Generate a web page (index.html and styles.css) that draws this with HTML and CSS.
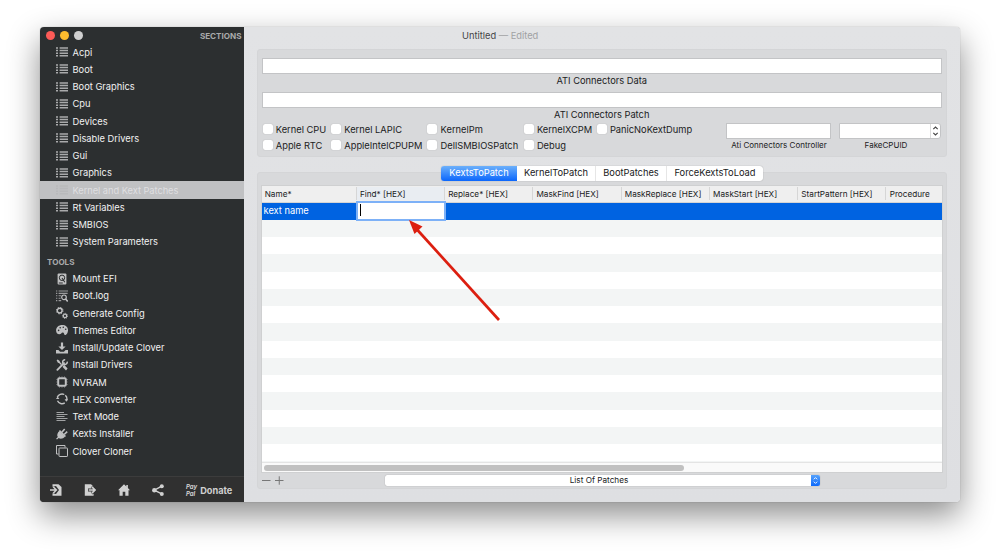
FILE: index.html
```
<!DOCTYPE html>
<html lang="en">
<head>
  <meta charset="UTF-8" />
  <meta name="viewport" content="width=device-width, initial-scale=1.0"/>
  <title>Untitled</title>
  <link rel="stylesheet" href="styles.css">
</head>
<body>
  <svg class="defs">
    <symbol id="i-list" viewBox="0 0 12 10">
      <path d="M0 1h2M0 3.6h2M0 6.2h2M0 8.8h2M3.6 1H12M3.6 3.6H12M3.6 6.2H12M3.6 8.8H12" stroke="currentColor" stroke-width="1.5"/>
    </symbol>
  </svg>

  <div class="window">
    <div class="sidebar">
      <div class="titlebar">
        <span class="light red"></span>
        <span class="light yellow"></span>
        <span class="light gray"></span>
        <span class="heading">SECTIONS</span>
      </div>
      <ul class="menu">
        <li><svg class="list"><use href="#i-list"/></svg>Acpi</li>
        <li><svg class="list"><use href="#i-list"/></svg>Boot</li>
        <li><svg class="list"><use href="#i-list"/></svg>Boot Graphics</li>
        <li><svg class="list"><use href="#i-list"/></svg>Cpu</li>
        <li><svg class="list"><use href="#i-list"/></svg>Devices</li>
        <li><svg class="list"><use href="#i-list"/></svg>Disable Drivers</li>
        <li><svg class="list"><use href="#i-list"/></svg>Gui</li>
        <li><svg class="list"><use href="#i-list"/></svg>Graphics</li>
        <li class="active"><svg class="list"><use href="#i-list"/></svg>Kernel and Kext Patches</li>
        <li><svg class="list"><use href="#i-list"/></svg>Rt Variables</li>
        <li><svg class="list"><use href="#i-list"/></svg>SMBIOS</li>
        <li><svg class="list"><use href="#i-list"/></svg>System Parameters</li>
      </ul>
      <div class="heading tools">TOOLS</div>
      <ul class="menu">
        <li>
          <svg viewBox="0 0 12 12"><rect x="1.6" y=".4" width="8.8" height="11.2" rx="1" fill="currentColor"/><circle cx="6" cy="4.8" r="2.7" fill="none" stroke="#2c2f30" stroke-width="1"/><path d="M6 5l2.8 4.2M2.8 10h4" stroke="#2c2f30" stroke-width="1.1"/></svg>
          Mount EFI
        </li>
        <li>
          <svg viewBox="0 0 12 12"><path d="M0 1h1.3M0 3.4h1.3M0 5.8h1.3M0 8.2h1.3M0 10.6h1.3M2.6 1H12M2.6 3.4h9M2.6 5.8h2.6M2.6 8.2h2M2.6 10.6h2.6" stroke="currentColor" stroke-width="1.1" opacity=".75"/><circle cx="8" cy="7.3" r="2.3" fill="none" stroke="currentColor" stroke-width="1.2"/><path d="M9.6 9l2.1 2.4" stroke="currentColor" stroke-width="1.5"/></svg>
          Boot.log
        </li>
        <li>
          <svg viewBox="0 0 12 12"><g fill="none" stroke="currentColor"><circle cx="3.7" cy="3.6" r="2.4" stroke-width="1.4"/><circle cx="3.7" cy="3.6" r="3.3" stroke-width="1" stroke-dasharray="1.3 1.29"/><circle cx="9" cy="8.9" r="1.7" stroke-width="1.3"/><circle cx="9" cy="8.9" r="2.6" stroke-width=".9" stroke-dasharray="1 1.04"/></g></svg>
          Generate Config
        </li>
        <li>
          <svg viewBox="0 0 12 12"><path d="M6.2 1C9.5 1 12 3 12 6c0 2.4-1.2 5-2.8 5-1.3 0-.8-2.6-2.5-2.6C5.2 8.4 5.4 10.2 3.4 10.2 1.2 10.2.1 8.6.1 6.5.1 3.2 2.9 1 6.2 1z" fill="currentColor"/><g fill="#2c2f30"><circle cx="2.6" cy="6.4" r=".8"/><circle cx="4.2" cy="3.7" r=".8"/><circle cx="7.3" cy="3.2" r=".8"/><circle cx="9.7" cy="5.3" r=".8"/></g></svg>
          Themes Editor
        </li>
        <li>
          <svg viewBox="0 0 12 12"><path d="M4.9.4h2.2v4h2.5L6 8 2.4 4.4h2.500zM0 8h2.4l1.7 1.7h3.8L9.6 8H12v3.6H0z" fill="currentColor"/></svg>
          Install/Update Clover
        </li>
        <li>
          <svg viewBox="0 0 12 12"><path d="M.6 1.3L1.7.4l2 1.5.2 1.2 2 2-.9.9-2-2-1.1-.2zM7.2 6.5l1.2-.6 3.2 3.7-1.6 1.8-3.4-3.5z" fill="currentColor"/><path d="M1.4 10.8L8 4.1" stroke="currentColor" stroke-width="1.9" stroke-linecap="round"/><path d="M11.2 2.7A2.3 2.3 0 1 1 9.2.8" fill="none" stroke="currentColor" stroke-width="1.5"/></svg>
          Install Drivers
        </li>
        <li>
          <svg viewBox="0 0 12 12"><rect x="2.2" y="2.2" width="7.6" height="7.6" rx="1" fill="none" stroke="currentColor" stroke-width="2"/><path d="M3.5 .3v1M6 .3v1M8.5 .3v1M3.5 10.7v1M6 10.7v1M8.5 10.7v1M.3 3.5h1M.3 6h1M.3 8.5h1M10.7 3.5h1M10.7 6h1M10.7 8.5h1" stroke="currentColor" stroke-width="1" opacity=".5"/></svg>
          NVRAM
        </li>
        <li>
          <svg viewBox="0 0 12 12"><path d="M1.3 4.3A5 5 0 0 1 8.3 1.5M9.3 2.2A5 5 0 0 1 10.6 7.5M8.8 9.9A5 5 0 0 1 1.5 7.8" fill="none" stroke="currentColor" stroke-width="1.4"/><path d="M8.6 6.2h3.4l-1.7 2.5zM0 5.9L1.6 3.4 3.4 5.9z" fill="currentColor"/></svg>
          HEX converter
        </li>
        <li>
          <svg viewBox="0 0 12 12"><path d="M.5 1.5h7.5M.5 3.5h11M.5 5.5h8M.5 7.5h11M.5 9.5h9" stroke="currentColor" stroke-width="1" opacity=".8"/></svg>
          Text Mode
        </li>
        <li>
          <svg viewBox="0 0 12 12"><path d="M3.5 3l5.5 5.4C7.2 10.8 4.3 11.2 2.7 9.9L1 11.6.1 10.8 1.8 9C.6 7.2 1.4 4.6 3.5 3z" fill="currentColor"/><path d="M3.5 2.5l6 6" stroke="currentColor" stroke-width="1.5"/><path d="M5.9 4.2L8.7 1M8.2 6.5l3-2.9" stroke="currentColor" stroke-width="1.6"/></svg>
          Kexts Installer
        </li>
        <li>
          <svg viewBox="0 0 12 12"><g fill="none" stroke="currentColor" stroke-width="1"><path d="M2.5 9H.5V.5H9v2"/><rect x="3" y="3" width="8.5" height="8.5" rx=".6"/></g></svg>
          Clover Cloner
        </li>
      </ul>
      <div class="bottombar">
        <svg viewBox="0 0 12 12"><path d="M2.500.2h6L11.5 3v8.8h-9V9.3L6 10l3-4-3-4-3.500.8z" fill="currentColor"/><path d="M0 6h5.5M3.2 2.8L6.4 6 3.2 9.2" fill="none" stroke="currentColor" stroke-width="1.5"/></svg>
        <svg viewBox="0 0 12 12"><path d="M.8.2H7l2.6 2.3v9.3H.8z" fill="currentColor"/><path d="M4 6h4.5M7.8 2.5L11.2 6 7.8 9.5" fill="none" stroke="#303030" stroke-width="2.8"/><path d="M4.7 6h6M7.9 2.9L11 6 7.9 9.1" fill="none" stroke="currentColor" stroke-width="1.6"/></svg>
        <svg viewBox="0 0 12 12"><path d="M6 .2l2.3 2.2V1h1.6v3L12 6.2h-1.5v5.5H7.3V7.8H4.7v3.9H1.5V6.2H0z" fill="currentColor"/></svg>
        <svg viewBox="0 0 12 12"><g fill="currentColor"><circle cx="2.3" cy="6.2" r="2.2"/><circle cx="9.8" cy="2.2" r="2"/><circle cx="9.8" cy="9.9" r="2"/></g><path d="M9.8 2.2L2.3 6.2l7.5 3.7" fill="none" stroke="currentColor" stroke-width="1.4"/></svg>
        <span class="paypal">Pay<br>Pal</span>
        <span class="donate">Donate</span>
      </div>
    </div>

    <div class="main">
      <div class="title">Untitled <span>— Edited</span></div>

      <div class="panel options">
        <div class="field"></div>
        <div class="label">ATI Connectors Data</div>
        <div class="field"></div>
        <div class="label">ATI Connectors Patch</div>
        <div class="flags">
          <div class="checks">
            <label><i></i>Kernel CPU</label>
            <label><i></i>Kernel LAPIC</label>
            <label><i></i>KernelPm</label>
            <label><i></i>KernelXCPM</label>
            <label><i></i>PanicNoKextDump</label>
            <label><i></i>Apple RTC</label>
            <label><i></i>AppleIntelCPUPM</label>
            <label><i></i>DellSMBIOSPatch</label>
            <label><i></i>Debug</label>
          </div>
          <div class="controller">
            <div class="field"></div>
            <span>Ati Connectors Controller</span>
          </div>
          <div class="fakecpuid">
            <div class="field combo">
              <svg viewBox="0 0 9 14"><path d="M2.3 5.2L4.5 3l2.2 2.2M2.3 8.8L4.5 11l2.2-2.2" fill="none" stroke="#444" stroke-width="1.1"/></svg>
            </div>
            <span>FakeCPUID</span>
          </div>
        </div>
      </div>

      <div class="panel patches">
        <div class="tabs">
          <span class="tab selected">KextsToPatch</span>
          <span class="tab">KernelToPatch</span>
          <span class="tab">BootPatches</span>
          <span class="tab">ForceKextsToLoad</span>
        </div>
        <div class="table">
          <div class="row head">
            <span>Name*</span>
            <span class="sorted">Find* [HEX]</span>
            <span>Replace* [HEX]</span>
            <span>MaskFind [HEX]</span>
            <span>MaskReplace [HEX]</span>
            <span>MaskStart [HEX]</span>
            <span>StartPattern [HEX]</span>
            <span>Procedure</span>
          </div>
          <div class="row current">
            <span>kext name</span>
            <span class="editor"></span>
          </div>
          <div class="stripes"></div>
          <div class="scrollbar"><div class="thumb"></div></div>
        </div>
        <div class="footer">
          <svg class="plusminus" viewBox="0 0 22 9"><path d="M0 4.5h8.5M13 4.5h8.5M17.25.3v8.4" stroke="#777" stroke-width="1"/></svg>
          <div class="popup">
            <span>List Of Patches</span>
            <svg viewBox="0 0 9 11"><path d="M2.8 4.3l1.7-1.7 1.7 1.7M2.8 6.7l1.7 1.7 1.7-1.7" fill="none" stroke="#fff" stroke-width=".9"/></svg>
          </div>
        </div>
      </div>
    </div>
  </div>

  <!-- arrow pointing at the Find cell -->
  <svg class="arrow" viewBox="0 0 100 110"><path d="M90 100L8 9.5" stroke="#dc1f10" stroke-width="2.7"/><path d="M0 0L13.5 6.5 5.5 14z" fill="#dc1f10"/></svg>
</body>
</html>
```
FILE: styles.css
```
* {
  box-sizing: border-box;
}
body {
  margin: 0;
  height: 555px;
  padding: 27px 40px 0;
  background: #fff;
  font-family: Inter, "Liberation Sans", sans-serif;
  font-size: 9.3px;
  color: #202122;
  overflow: hidden;
  white-space: nowrap;
}
.defs { display: none; }
.window {
  display: flex;
  width: 920px;
  height: 475px;
  border-radius: 4px;
  box-shadow: 0 0 1px rgba(0,0,0,0.4), 0 13px 32px rgba(0,0,0,0.45);
}

/* sidebar */
.sidebar {
  display: flex;
  flex-direction: column;
  width: 203.5px;
  background: #2c2f30;
  border-radius: 4px 0 0 4px;
  overflow: hidden;
}
.titlebar {
  display: flex;
  align-items: center;
  gap: 5.3px;
  height: 16.4px;
  padding: 0 2px 0 5.8px;
}
.light {
  width: 9px;
  height: 9px;
  border-radius: 50%;
}
.red { background: #fc5b57; }
.yellow { background: #fdbc2e; }
.gray { background: #d0d0d0; }
.heading {
  margin-left: auto;
  padding-top: 1px;
  font-size: 8.1px;
  font-weight: 700;
  color: #a9aaab;
}
.tools {
  height: 19.5px;
  margin: 0;
  padding: 0 0 0 7px;
  line-height: 25px;
}
.menu {
  margin: 0;
  padding: 0;
  list-style: none;
}
.menu li {
  display: flex;
  align-items: center;
  gap: 4.5px;
  height: 17.25px;
  padding-left: 16px;
  color: #f2f2f2;
}
.menu svg {
  width: 12px;
  height: 12px;
  color: #c0c1c2;
}
.menu svg.list {
  height: 10px;
  color: #a9aaab;
}
.menu .active {
  background: #c0c1c3;
  color: #dfdfe1;
  letter-spacing: -0.05px;
}
.menu .active svg { color: #b8b9bb; }
.bottombar {
  display: flex;
  align-items: center;
  height: 26px;
  margin-top: auto;
  padding-left: 10px;
  border-top: 1px solid #3c3c3c;
  background: #303030;
  color: #d0d0d0;
}
.bottombar svg {
  width: 12px;
  height: 12px;
  margin-right: 22px;
}
.paypal {
  font-size: 6px;
  font-style: italic;
  font-weight: 700;
  line-height: 7px;
}
.donate {
  margin: 1px 0 0 3px;
  font-size: 9.2px;
  font-weight: 700;
}

/* main area */
.main {
  flex: 1;
  padding: 0 13px;
  background: linear-gradient(#e2e3e5, #dedfe2);
  border-radius: 0 4px 4px 0;
}
.title {
  height: 22px;
  padding-left: 205.5px;
  line-height: 18px;
  color: #444546;
}
.title span { color: #a0a1a3; }
.panel {
  background: #d8d9db;
  border: 1px solid #d4d5d7;
  border-radius: 3px;
}
.options {
  height: 108px;
  padding: 8px 4.5px 0;
}
.field {
  height: 16px;
  background: #fff;
  border: 1px solid #c3c4c6;
}
.label {
  height: 18px;
  line-height: 14px;
  text-align: center;
}
.flags { display: flex; }
.checks {
  display: grid;
  grid-template-columns: 68.5px 96.3px 96.3px 73px 128.9px;
  grid-template-rows: 16px 16px;
  margin: -5px 0 0 0.5px;
}
.checks label {
  display: flex;
  align-items: center;
  gap: 3.3px;
}
.checks i {
  width: 10px;
  height: 10px;
  background: #fff;
  border-radius: 2px;
  box-shadow: 0 0 1px rgba(0,0,0,0.3);
}
.controller, .fakecpuid {
  width: 105px;
  margin-top: -3px;
  font-size: 8px;
  line-height: 12px;
  text-align: center;
}
.controller { margin-left: 1px; }
.fakecpuid {
  width: 102px;
  margin-left: 8px;
}
.fakecpuid span { padding-right: 9px; }
.combo {
  display: flex;
  justify-content: flex-end;
  border-radius: 0 3px 3px 0;
}
.combo svg {
  width: 10px;
  height: 14px;
  border-left: 1px solid #ddd;
}
.patches {
  height: 317px;
  margin-top: 15px;
  padding: 0 3px;
}
.tabs {
  display: flex;
  width: 322px;
  height: 15px;
  margin: -7px 0 4px 180.5px;
  background: #fff;
  border-radius: 3px;
  box-shadow: 0 0 1px rgba(0,0,0,0.4);
}
.tab {
  width: 79px;
  line-height: 14px;
  text-align: center;
  border-right: 1px solid #e6e6e6;
}
.tab:nth-child(3) { width: 71px; }
.tab:last-child {
  width: 96px;
  border: none;
}
.selected {
  width: 76px;
  background: linear-gradient(#6cb0fb, #0a66fc);
  border: none;
  border-radius: 3px 0 0 3px;
  color: #fff;
}
.table {
  height: 288px;
  border: 1px solid #cfd0d1;
  background: #fff;
}
.row {
  display: grid;
  grid-template-columns: 95.2px repeat(6, 88.3px) 1fr;
  height: 17px;
  line-height: 15px;
}
.head {
  background: #efefef;
  border-bottom: 1px solid #d5d5d5;
  font-size: 8.2px;
}
.head span {
  height: 13px;
  margin-top: 1px;
  padding-left: 3.2px;
  border-right: 1px solid #d6d6d6;
  line-height: 14px;
}
.head span:last-child { border: none; }
.head .sorted { background: #e9edf2; }
.current {
  background: #0063e1;
  color: #fff;
}
.current span { padding-left: 2px; }
.current .editor {
  position: relative;
  height: 16px;
  margin: 0 1px;
  background: #fff;
  box-shadow: 0 0 0 2px #7db1f7;
}
.editor::before {
  content: "";
  display: block;
  width: 1px;
  height: 12px;
  margin-top: 1px;
  background: #000;
}
.stripes {
  height: 242px;
  background: repeating-linear-gradient(#f3f5f5 0, #f3f5f5 17.25px, #fff 17.25px, #fff 34.5px);
}
.scrollbar {
  height: 10px;
  padding: 2px 2.3px;
  border-top: 1px solid #e4e4e4;
  background: #fafafa;
}
.thumb {
  width: 420px;
  height: 6px;
  border-radius: 3px;
  background: #c1c1c1;
}
.footer {
  display: flex;
  padding: 2px 0 0 1px;
}
.plusminus {
  width: 22px;
  height: 9px;
  margin-top: 1px;
}
.popup {
  display: flex;
  width: 435px;
  height: 11px;
  margin-left: 101.5px;
  background: #fff;
  border-radius: 2px;
  box-shadow: 0 0 1px rgba(0,0,0,0.4);
  font-size: 8.2px;
  line-height: 11px;
  text-align: center;
}
.popup span {
  flex: 1;
  padding-left: 2px;
}
.popup svg {
  width: 9px;
  height: 11px;
  border-radius: 0 2px 2px 0;
  background: linear-gradient(#56a2fb, #0d6afc);
}

.arrow {
  position: absolute;
  left: 409px;
  top: 220px;
  width: 100px;
  height: 110px;
}
```
